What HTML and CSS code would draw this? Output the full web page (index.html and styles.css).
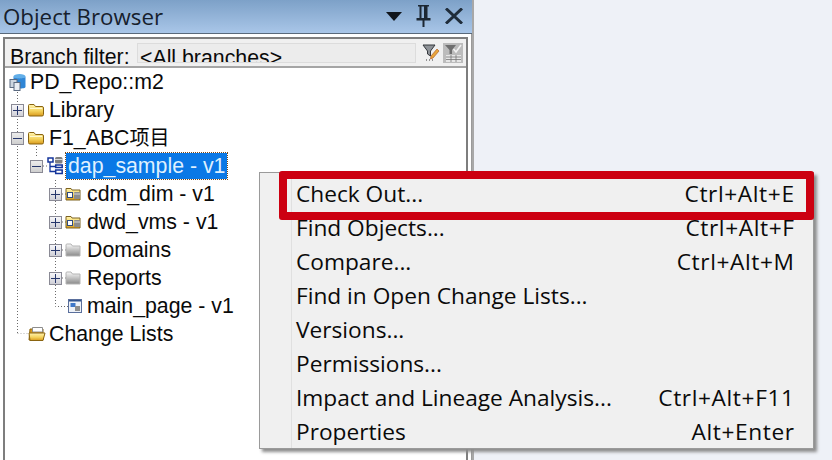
FILE: index.html
```html
<!DOCTYPE html>
<html lang="en">
<head>
<meta charset="utf-8">
<title>Object Browser</title>
<link rel="stylesheet" href="styles.css">
</head>
<body>
<svg class="defs" width="0" height="0" aria-hidden="true">
  <defs>
    <linearGradient id="gold" x1="0" y1="0" x2="0" y2="1"><stop offset="0" stop-color="#fff3b0"/><stop offset=".55" stop-color="#f5d45e"/><stop offset="1" stop-color="#d99a1c"/></linearGradient>
    <linearGradient id="grey" x1="0" y1="0" x2="0" y2="1"><stop offset="0" stop-color="#fafafa"/><stop offset="1" stop-color="#8a8a8a"/></linearGradient>
    <symbol id="folder-gold" viewBox="0 0 18 16"><path d="M1.500 5V3.500Q1.500 2.500 2.500 2.500H7L8.500 4.500H15Q16.500 4.500 16.500 6V12.500Q16.500 14 15 14H3Q1.500 14 1.500 12.500Z" fill="url(#gold)" stroke="#8a6410"/><path d="M3 6.500H15" stroke="#fff8d0"/></symbol>
    <symbol id="folder-pkg" viewBox="0 0 16 14"><path d="M1 1.500H6L7 3H15V13H1Z" fill="url(#gold)" stroke="#7d6220"/><rect x="2.500" y="5.500" width="5" height="5" fill="#fff" stroke="#2f4b82"/><rect x="9" y="5" width="6" height="7" rx="1" fill="#8d8d8d"/><path d="M9 7H15" stroke="#d8d8d8"/></symbol>
    <symbol id="folder-grey" viewBox="0 0 16 14"><path d="M1 2Q1 1 2 1H6L7.500 3H15V13H1Z" fill="url(#grey)" stroke="#b4b4b4"/></symbol>
  </defs>
</svg>
<div class="screen">
  <section class="panel">
    <header class="titlebar">
      <h1 class="title">Object Browser</h1>
      <div class="title-tools">
        <svg width="16" height="9" viewBox="0 0 16 9"><path d="M0 0H16L8 9Z" fill="#10151c"/></svg>
        <svg width="15" height="22" viewBox="0 0 15 22"><path d="M2 0H13V1.500H11.500V13H14.500V15.500H8.500V22H6.500V15.500H.5V13H3.500V1.500H2ZM5.500 1.500V13H8V1.500Z" fill="#1c2733"/></svg>
        <svg width="18" height="16" viewBox="0 0 18 16"><path d="M1 .5L17 15.500M17 .5L1 15.500" stroke="#1f2c3a" stroke-width="3" fill="none"/></svg>
      </div>
    </header>
    <div class="panel-body">
      <div class="content">
        <div class="filter">
          <span class="filter-label">Branch filter:</span>
          <span class="filter-input">&lt;All branches&gt;</span>
          <svg class="filter-edit" width="18" height="18" viewBox="0 0 18 18">
            <path d="M1 1H13L8.500 7V12L5.500 10V7Z" fill="#8e9297" stroke="#34383d"/>
            <path d="M9 12L15 5L17 7L11 14L8.500 15Z" fill="#e9a63a" stroke="#b0602a" stroke-width=".7"/>
            <path d="M4 16h1M7 16h1M10 16h1" stroke="#333"/>
          </svg>
          <svg class="filter-table" width="20" height="20" viewBox="0 0 20 20">
            <rect width="20" height="20" fill="#bcbcbc"/>
            <path d="M2 2H13L9 7V11H6.500V7Z" fill="#6f6f6f"/>
            <path d="M10.500 6L13 9L18 2" stroke="#f2f2f2" stroke-width="1.600" fill="none"/>
            <path d="M3 12H18V19H3Z" fill="#e6e6e6"/>
            <path d="M3 14H18M3 16.500H18M8 12V19M13 12V19" stroke="#777" stroke-width=".8"/>
          </svg>
        </div>
        <div class="tree">
          <svg class="tree-lines" width="120" height="266" viewBox="0 0 120 266">
            <g stroke="#6b6b6b" stroke-dasharray="1 2" fill="none">
              <path d="M17.500 24V266M17.500 266H28"/>
              <path d="M36.500 78V90M43 98H47"/>
              <path d="M55.500 112V238.500H68"/>
              <path d="M62 126H66M62 154H66M62 182H66M62 210H66"/>
            </g>
          </svg>
          <div class="row lvl0">
            <svg class="icon" width="18" height="18" viewBox="0 0 18 18">
              <ellipse cx="10.500" cy="3.500" rx="6" ry="2.500" fill="#62aee8"/>
              <path d="M4.500 3.500V14C4.500 16 16.500 16 16.500 14V3.500C16.500 6 4.500 6 4.500 3.500Z" fill="#2f86d6"/>
              <rect x="1" y="6.500" width="7" height="8" fill="#cdd6e0" stroke="#5a6a80"/>
              <rect x="5" y="9.500" width="6" height="8" fill="#e8edf3" stroke="#5a6a80"/>
            </svg>
            <span class="label">PD_Repo::m2</span>
          </div>
          <div class="row lvl1">
            <span class="toggle"><span class="h"></span><span class="v"></span></span>
            <svg class="icon" width="18" height="16"><use href="#folder-gold"/></svg>
            <span class="label">Library</span>
          </div>
          <div class="row lvl1">
            <span class="toggle minus"><span class="h"></span></span>
            <svg class="icon" width="18" height="16"><use href="#folder-gold"/></svg>
            <span class="label">F1_ABC<span class="cjk">项目</span></span>
          </div>
          <div class="row lvl2">
            <span class="toggle minus"><span class="h"></span></span>
            <svg class="icon model" width="16" height="18" viewBox="0 0 16 18">
              <path d="M3 4V14.500H8M3 9.500H8" stroke="#14359b" stroke-width="1.300" fill="none"/>
              <rect x="1" y="1" width="5" height="4" fill="#fff" stroke="#14359b" stroke-width="1.500"/>
              <rect x="8.700" y="8" width="6.500" height="2.500" fill="#fff" stroke="#14359b" stroke-width="1.500"/>
              <rect x="8.700" y="13" width="6.500" height="3.500" fill="#fff" stroke="#14359b" stroke-width="1.500"/>
              <rect x="8" y="0" width="7.500" height="6.500" rx="1.500" fill="#808080"/>
              <path d="M8 2.500H15.500" stroke="#dadada"/>
            </svg>
            <span class="label selected">dap_sample - v1</span>
          </div>
          <div class="row lvl3">
            <span class="toggle"><span class="h"></span><span class="v"></span></span>
            <svg class="icon" width="16" height="14"><use href="#folder-pkg"/></svg>
            <span class="label">cdm_dim - v1</span>
          </div>
          <div class="row lvl3">
            <span class="toggle"><span class="h"></span><span class="v"></span></span>
            <svg class="icon" width="16" height="14"><use href="#folder-pkg"/></svg>
            <span class="label">dwd_vms - v1</span>
          </div>
          <div class="row lvl3">
            <span class="toggle"><span class="h"></span><span class="v"></span></span>
            <svg class="icon" width="16" height="14"><use href="#folder-grey"/></svg>
            <span class="label">Domains</span>
          </div>
          <div class="row lvl3">
            <span class="toggle"><span class="h"></span><span class="v"></span></span>
            <svg class="icon" width="16" height="14"><use href="#folder-grey"/></svg>
            <span class="label">Reports</span>
          </div>
          <div class="row leaf">
            <svg class="icon" width="14" height="14" viewBox="0 0 14 14"><rect x=".5" y=".5" width="13" height="13" fill="#eef2f8" stroke="#5a6f9c"/><path d="M1 1H13V2.500H1Z" fill="#33558f"/><rect x="2.500" y="4" width="5" height="4" fill="#3f78c8"/><rect x="7" y="7" width="5" height="5" fill="#8f8f8f"/></svg>
            <span class="label">main_page - v1</span>
          </div>
          <div class="row leaf-top">
            <svg class="icon" width="18" height="16" viewBox="0 0 18 16"><path d="M2 3H15V14H1Z" fill="#d99a1c" stroke="#8a6410"/><path d="M4.500 1.500H14.500V6H4.500Z" fill="#fff" stroke="#8d8d8d"/><path d="M1 7H17L15 14.500H2Z" fill="url(#gold)" stroke="#8a6410"/></svg>
            <span class="label">Change Lists</span>
          </div>
        </div>
      </div>
    </div>
  </section>
  <nav class="menu">
    <div class="item"><span>Check Out...</span><span class="key">Ctrl+Alt+E</span></div>
    <div class="item"><span>Find Objects...</span><span class="key">Ctrl+Alt+F</span></div>
    <div class="item"><span>Compare...</span><span class="key">Ctrl+Alt+M</span></div>
    <div class="item"><span>Find in Open Change Lists...</span></div>
    <div class="item"><span>Versions...</span></div>
    <div class="item"><span>Permissions...</span></div>
    <div class="item"><span>Impact and Lineage Analysis...</span><span class="key">Ctrl+Alt+F11</span></div>
    <div class="item"><span>Properties</span><span class="key">Alt+Enter</span></div>
    <div class="callout"></div>
  </nav>
</div>
</body>
</html>
```

FILE: styles.css
```css
* { box-sizing: border-box; }
html, body { margin: 0; padding: 0; }
body { width: 832px; height: 460px; overflow: hidden; background: #eef1f7; }
.defs { position: absolute; }
.screen { position: relative; width: 832px; height: 460px; overflow: hidden; display: flex; font-family: "Liberation Sans", Arial, "Noto Sans CJK SC", sans-serif; color: #0a0a0a; }

.panel { width: 474px; height: 460px; display: flex; flex-direction: column; background: #fff; border-right: 2px solid #a8a8a8; }
.titlebar { height: 34px; flex: none; display: flex; justify-content: space-between; align-items: center; padding: 0 9px 0 3px; background: linear-gradient(#7da1c8, #a9c6e8); border-bottom: 1px solid #59697a; }
.title { margin: 0; font-family: "Open Sans", sans-serif; font-weight: 400; font-size: 22.3px; line-height: 35px; color: #16202c; }
.title-tools { display: flex; align-items: center; gap: 14px; padding-bottom: 1px; }

.panel-body { flex: 1; min-height: 0; padding: 3px 3px 0 3px; border-right: 1px solid #9a9a9a; }
.content { height: 100%; border: 2px solid #7e7e7e; border-bottom: 0; background: #fff; display: flex; flex-direction: column; }

.filter { height: 29px; flex: none; overflow: hidden; display: flex; align-items: flex-start; background: #f0f0f0; border-bottom: 2px solid #a5a5a5; padding: 4px 0 0 5px; }
.filter-label { font-size: 21.3px; line-height: 28px; width: 127px; flex: none; }
.filter-input { width: 279px; height: 20px; flex: none; overflow: hidden; background: #ececec; border: 1px solid #dcdcdc; font-size: 21.3px; line-height: 28px; padding-left: 2px; }
.filter-edit { flex: none; margin: 1px 0 0 6px; }
.filter-table { flex: none; margin: 0 0 0 3px; }

.tree { flex: 1; position: relative; }
.tree-lines { position: absolute; left: -5px; top: 0; }
.row { height: 28px; display: flex; align-items: center; font-size: 21.3px; line-height: 28px; position: relative; }
.lvl0 { padding-left: 4px; }
.lvl1 { padding-left: 6px; }
.lvl2 { padding-left: 25px; }
.lvl3 { padding-left: 44px; }
.leaf { padding-left: 63px; }
.leaf-top { padding-left: 23px; }
.icon { flex: none; }
.toggle { width: 13px; height: 13px; flex: none; position: relative; border: 1px solid #8a8a95; background: linear-gradient(#f7f7fa, #cfcfd6); margin-right: 3px; }
.toggle.minus { background: linear-gradient(#ececec, #cfcfcf); }
.toggle .h { position: absolute; left: 1px; right: 1px; top: 5px; height: 1px; background: #26366b; }
.toggle .v { position: absolute; top: 1px; bottom: 1px; left: 5px; width: 1px; background: #26366b; }
.label { margin-left: 3px; white-space: nowrap; }
.lvl1 .label { margin-left: 4px; }
.lvl3 .label { margin-left: 6px; }
.leaf .label { margin-left: 5px; }
.cjk { font-size: 20px; }
.model { margin-left: 1px; }
.selected { background: #0a78e6; color: #dff0ff; outline: 1px dotted #7a4a1a; padding: 0 2px; line-height: 26px; height: 26px; }

.menu { position: absolute; left: 259px; top: 172px; width: 555px; height: 277px; background: #f0f0f0; border: 1px solid #9a9a9a; box-shadow: 3px 3px 3px #8d8d8d; padding: 3px 19px 0 36px; font-family: "Open Sans", sans-serif; font-size: 22.7px; }
.menu::before { content: ""; position: absolute; left: 31px; top: 0; bottom: 0; width: 1px; background: #e0e0e0; }
.item { height: 34px; display: flex; justify-content: space-between; align-items: center; white-space: nowrap; }
.key { letter-spacing: .6px; margin-right: -.6px; }
.callout { position: absolute; left: 19px; top: -2px; width: 535px; height: 49px; border: 8px solid #cc0011; border-radius: 3px; }
```
